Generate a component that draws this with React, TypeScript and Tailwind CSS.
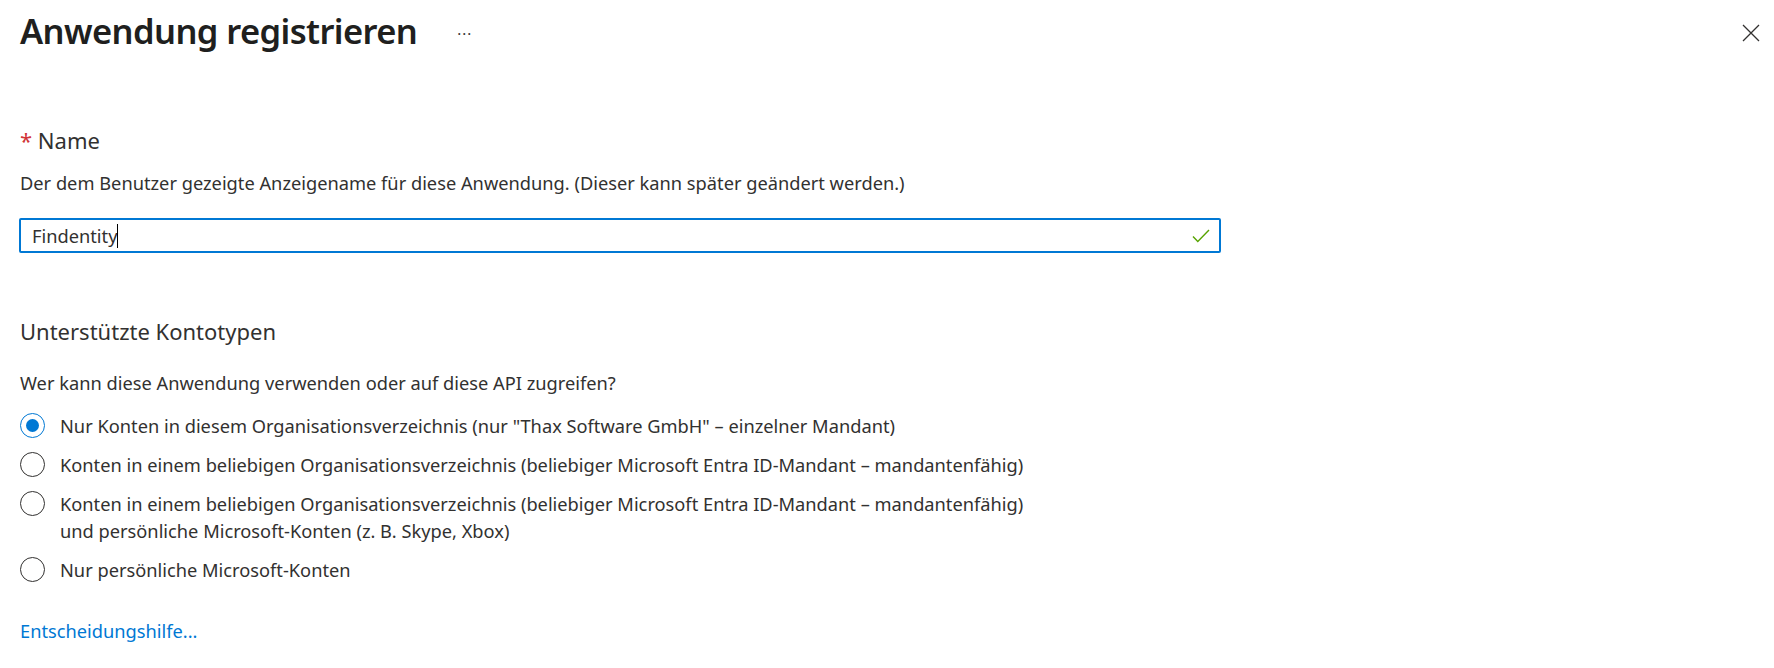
const options = [
  { id: "single", label: 'Nur Konten in diesem Organisationsverzeichnis (nur "Thax Software GmbH" – einzelner Mandant)', checked: true },
  { id: "multi", label: "Konten in einem beliebigen Organisationsverzeichnis (beliebiger Microsoft Entra ID-Mandant – mandantenfähig)" },
  {
    id: "multi-personal",
    label: "Konten in einem beliebigen Organisationsverzeichnis (beliebiger Microsoft Entra ID-Mandant – mandantenfähig)",
    sub: "und persönliche Microsoft-Konten (z. B. Skype, Xbox)",
  },
  { id: "personal", label: "Nur persönliche Microsoft-Konten" },
]

function Radio({ checked }: { checked?: boolean }) {
  return (
    <span
      className={
        checked
          ? "flex size-[25px] shrink-0 items-center justify-center rounded-full border border-[#0078d4]"
          : "flex size-[25px] shrink-0 items-center justify-center rounded-full border border-[#323130]"
      }
    >
      {checked && <span className="size-[13px] rounded-full bg-[#0078d4]" />}
    </span>
  )
}

export default function App() {
  return (
    <div className="min-h-[668px] bg-white pl-[20px] pr-[14px] pt-[7px] font-['Noto_Sans',sans-serif] text-[18.25px] text-[#323130]">
      <div className="flex items-center">
        <h1 className="text-[34.5px] leading-[48px] font-semibold tracking-[-0.6px] text-[#201f1e]">Anwendung registrieren</h1>
        <span className="ml-[40px] mt-[4px] text-[15px] tracking-[1px] text-[#323130]">···</span>
        <button className="ml-auto mr-[0px] mt-[4px] text-[#323130]">
          <svg width="18" height="18" viewBox="0 0 18 18" fill="none" stroke="currentColor" strokeWidth="1.3">
            <path d="M1 1 17 17M17 1 1 17" />
          </svg>
        </button>
      </div>

      <div className="mt-[70px] text-[22px] leading-[30px]">
        <span className="text-[#d13438]">*</span> Name
      </div>
      <p className="mt-[16px] leading-[24px]">
        Der dem Benutzer gezeigte Anzeigename für diese Anwendung. (Dieser kann später geändert werden.)
      </p>
      <div className="mt-[23px] flex h-[35px] w-[1202px] -ml-px items-center rounded-[2px] border-2 border-[#0078d4] pl-[11px] pr-[9px]">
        <span className="leading-[31px]">Findentity</span>
        <span className="h-[24px] w-px bg-black" />
        <svg className="ml-auto" width="18" height="14" viewBox="0 0 18 14" fill="none" stroke="#57a300" strokeWidth="1.4">
          <path d="M1 7.5 5.8 12.5 17 1" />
        </svg>
      </div>

      <h2 className="mt-[63px] text-[22px] leading-[30px]">Unterstützte Kontotypen</h2>
      <p className="mt-[25px] leading-[24px]">Wer kann diese Anwendung verwenden oder auf diese API zugreifen?</p>

      <div className="mt-[17px] flex flex-col gap-[12px]">
        {options.map((o) => (
          <label key={o.id} className="flex items-start gap-[15px] leading-[27px]">
            <span className="flex h-[27px] items-center">
              <Radio checked={o.checked} />
            </span>
            <span>
              {o.label}
              {o.sub && (
                <>
                  <br />
                  {o.sub}
                </>
              )}
            </span>
          </label>
        ))}
      </div>

      <a href="#" className="mt-[36px] block w-fit leading-[24px] text-[#0078d4]">
        Entscheidungshilfe...
      </a>
    </div>
  )
}
